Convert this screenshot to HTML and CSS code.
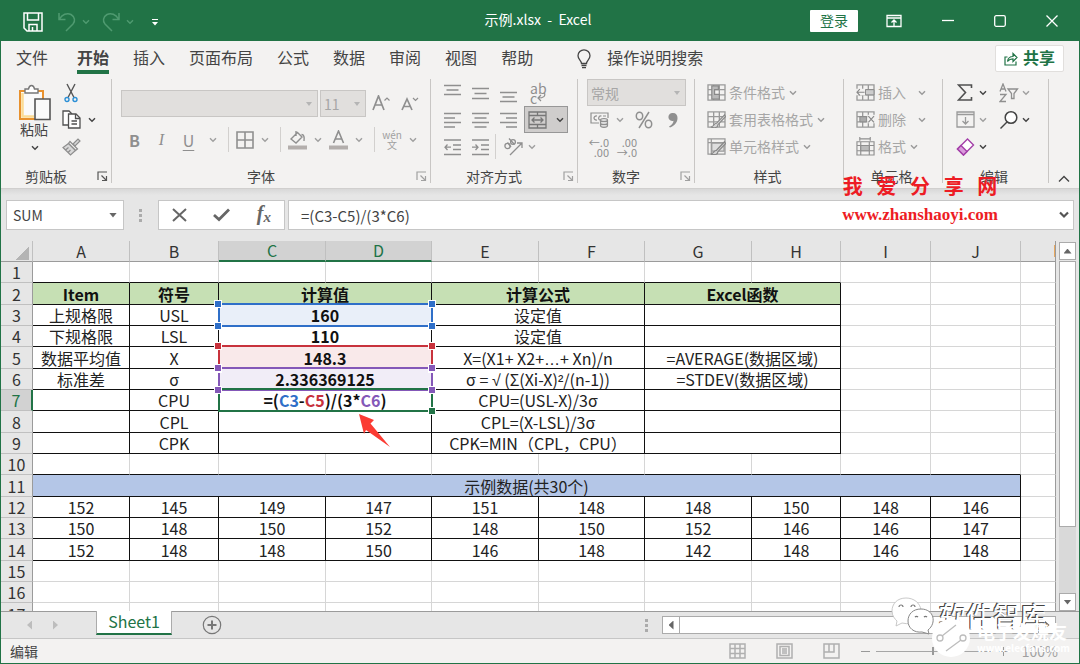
FILE: index.html
```html
<!DOCTYPE html>
<html lang="zh-CN">
<head>
<meta charset="utf-8">
<title>示例.xlsx - Excel</title>
<link rel="stylesheet" href="styles.css">
</head>
<body>
<svg class="defs" aria-hidden="true">
  <symbol id="chev" viewBox="0 0 8 6"><path d="M1 1.2 4 4.3 7 1.2" fill="none" stroke="currentColor" stroke-width="1.4"/></symbol>
  <symbol id="launch" viewBox="0 0 11 11"><path d="M1 9V1H10M4.500 4.500 9 9M9.500 5V9.500H5" fill="none" stroke="currentColor" stroke-width="1.200"/></symbol>
  <symbol id="grid" viewBox="0 0 20 18"><path d="M1 1H19V17H1ZM1 6H19M1 11.500H19M7 1V17M13 1V17" fill="none" stroke="currentColor" stroke-width="1.400"/></symbol>
</svg>
<div class="app">
  <header class="titlebar">
    <div class="quick">
      <button class="ic save" aria-label="保存"><svg width="20" height="20" viewBox="0 0 20 20" fill="none" stroke="#fff" stroke-width="1.500"><path d="M1 1H19V19H4L1 16ZM4.500 1V8H15.500V1M6 19V12.500H14V19M9.500 15V19"/></svg></button>
      <button class="ic undo" aria-label="撤销"><svg width="18" height="20" viewBox="0 0 18 20" fill="none" stroke="#4f9a70" stroke-width="1.500"><path d="M1 1V7.500H7.500M1.500 7C4 2.500 9 .5 13 2.500C17 5 17.500 9 15 12L8 19"/></svg><svg class="chev faint"><use href="#chev"/></svg></button>
      <button class="ic redo" aria-label="恢复"><svg width="18" height="20" viewBox="0 0 18 20" fill="none" stroke="#4f9a70" stroke-width="1.500"><path d="M17 1V7.500H10.500M16.500 7C14 2.500 9 .5 5 2.500C1 5 .5 9 3 12L10 19"/></svg><svg class="chev faint"><use href="#chev"/></svg></button>
      <button class="ic" aria-label="自定义快速访问工具栏"><svg width="6" height="7" viewBox="0 0 6 7" fill="#fff"><path d="M0 0H6V1H0ZM0 3H6L3 6.500Z"/></svg></button>
    </div>
    <h1 class="doc">示例.xlsx&nbsp; - &nbsp;Excel</h1>
    <div class="winctl">
      <button class="login">登录</button>
      <button class="ic" aria-label="功能区显示选项"><svg width="16" height="14" viewBox="0 0 16 14" fill="none" stroke="#fff" stroke-width="1.300"><path d="M1 1.500H15V12.500H1ZM1 4H15M8 12V6M5.500 8.500 8 6 10.500 8.500"/></svg></button>
      <button class="ic" aria-label="最小化"><svg width="12" height="12" viewBox="0 0 12 12" stroke="#fff" stroke-width="1.300"><path d="M0 5.500H12"/></svg></button>
      <button class="ic" aria-label="最大化"><svg width="12" height="12" viewBox="0 0 12 12" fill="none" stroke="#fff" stroke-width="1.300"><rect x=".7" y=".7" width="10.600" height="10.600" rx="1.500"/></svg></button>
      <button class="ic" aria-label="关闭"><svg width="12" height="12" viewBox="0 0 12 12" stroke="#fff" stroke-width="1.300"><path d="M.5 .5 11.500 11.500M11.500 .5 .5 11.500"/></svg></button>
    </div>
  </header>

  <nav class="tabs">
    <a href="#file" class="file">文件</a><a href="#home" class="on">开始</a><a href="#insert">插入</a><a href="#layout">页面布局</a><a href="#formula">公式</a><a href="#data">数据</a><a href="#review">审阅</a><a href="#view">视图</a><a href="#help">帮助</a>
    <button class="tell"><svg width="14" height="20" viewBox="0 0 14 20" fill="none" stroke="#444" stroke-width="1.300"><path d="M4.500 14.500C4.500 11.500 1 10.500 1 6.800A6 6 0 0 1 13 6.800C13 10.500 9.500 11.500 9.500 14.500ZM4.500 16.500H9.500M5 18.700H9"/></svg><span>操作说明搜索</span></button>
    <button class="share"><svg width="14" height="14" viewBox="0 0 14 14" fill="none" stroke="#217346" stroke-width="1.200"><path d="M3.500 5H1V13H12V9.500M3.500 9.500C4 6 6 4.500 9 4.500V1.500L13 5.500 9 9.500V6.800C6.500 6.800 5 7.500 3.500 9.500Z"/></svg><span>共享</span></button>
  </nav>

  <section class="ribbon">
    <div class="group g-clip">
      <div class="body">
        <button class="paste"><svg width="34" height="37" viewBox="0 0 34 37"><path d="M2 7H25V35H2Z" fill="#fafafa" stroke="#e8912d" stroke-width="2"/><path d="M4.500 9V32.500H16" fill="none" stroke="#fbdc95" stroke-width="2.500"/><path d="M7 9V5H10.500C11 2.500 12 1.500 13.500 1.500S16 2.500 16.500 5H20V9Z" fill="#fff" stroke="#777" stroke-width="1.400"/><path d="M17 15H32V35.500H17Z" fill="#fafafa" stroke="#555" stroke-width="1.600"/></svg><span>粘贴</span><svg class="chev dark"><use href="#chev"/></svg></button>
        <div class="rows small">
          <div class="row"><button class="ic i22" aria-label="剪切"><svg width="14" height="20" viewBox="0 0 14 20" fill="none" stroke-width="1.400"><path d="M3 1 10 14.500M11 1 4 14.500" stroke="#555"/><circle cx="3" cy="16.500" r="2" stroke="#2b8fd6"/><circle cx="11" cy="16.500" r="2" stroke="#2b8fd6"/></svg></button></div>
          <div class="row"><button class="ic i22" aria-label="复制"><svg width="19" height="19" viewBox="0 0 19 19" fill="#fff" stroke="#505050" stroke-width="1.300"><path d="M6 15H1V1H7L10 4"/><path d="M6.500 4H14L18 8V18H6.500Z"/><path d="M13.500 4V8.500H18M9.500 11H15M9.500 14H15" fill="none"/></svg></button><svg class="chev dark"><use href="#chev"/></svg></div>
          <div class="row"><button class="ic i22" aria-label="格式刷"><svg width="19" height="18" viewBox="0 0 19 18" fill="#d8d8d8" stroke="#8d8d8d" stroke-width="1.200"><path d="M11 6 16 1 18 3 13 8Z"/><path d="M8 3.500 15.500 11 13.500 12.500 6.500 5.500Z" fill="#f3f2f1"/><path d="M6.500 5.500 1 9.500 8.500 17 13.500 12.500ZM3.500 12 6.500 9.500M6 14.500 8.500 12"/></svg></button></div>
        </div>
      </div>
      <div class="cap"><span>剪贴板</span><svg class="launch dark"><use href="#launch"/></svg></div>
    </div>

    <div class="group g-font">
      <div class="body col">
        <div class="row">
          <span class="drop fname"><select aria-label="字体" disabled><option></option></select></span>
          <span class="drop fsize"><select aria-label="字号" disabled><option>11</option></select></span>
          <button class="ic grow" disabled aria-label="增大字号"><svg width="18" height="18" viewBox="0 0 18 18" fill="none" stroke="#8f8f8f"><path d="M1 15 6.500 1 12 15M3 10H10" stroke-width="1.700"/><path d="M12.500 5.500 15 3 17.500 5.500" stroke-width="1.200"/></svg></button>
          <button class="ic grow" disabled aria-label="减小字号"><svg width="18" height="18" viewBox="0 0 18 18" fill="none" stroke="#8f8f8f"><path d="M1 15 6 4 11 15M3 11.500H9" stroke-width="1.700"/><path d="M12 3 14.500 5.500 17 3" stroke-width="1.200"/></svg></button>
        </div>
        <div class="row fmt">
          <button class="let b" disabled>B</button><button class="let i" disabled>I</button><button class="let u" disabled>U</button><svg class="chev"><use href="#chev"/></svg>
          <i class="sep"></i>
          <button class="ic" disabled aria-label="边框"><svg width="18" height="18" viewBox="0 0 18 18" fill="none" stroke="#8f8f8f" stroke-width="1.600"><path d="M1 1H17V17H1ZM1 9H17M9 1V17"/></svg></button><svg class="chev"><use href="#chev"/></svg>
          <i class="sep"></i>
          <button class="ic" disabled aria-label="填充颜色"><svg width="19" height="20" viewBox="0 0 19 20" fill="none" stroke="#8f8f8f" stroke-width="1.400"><path d="M8 1V6M3 9 9.500 2.500 14 7 8 13ZM13.500 4.500C16 4.500 16.500 7 16 11"/><path d="M0 17.500H19" stroke="#b3aeac" stroke-width="4"/></svg></button><svg class="chev"><use href="#chev"/></svg>
          <button class="ic" disabled aria-label="字体颜色"><svg width="19" height="20" viewBox="0 0 19 20" fill="none" stroke="#8f8f8f" stroke-width="1.600"><path d="M4.500 13 9.500 1 14.500 13M6 9H13"/><path d="M0 17.500H19" stroke="#b3aeac" stroke-width="4"/></svg></button><svg class="chev"><use href="#chev"/></svg>
          <i class="sep"></i>
          <button class="pinyin" disabled><span>wén</span><span>文</span></button><svg class="chev"><use href="#chev"/></svg>
        </div>
      </div>
      <div class="cap"><span>字体</span><svg class="launch"><use href="#launch"/></svg></div>
    </div>

    <div class="group g-align">
      <div class="body col">
        <div class="row">
          <button class="ic i28" disabled aria-label="顶端对齐"><svg width="18" height="20" viewBox="0 0 18 20" stroke="#8f8f8f" stroke-width="1.300"><path d="M0 2.500H17M2.500 7H14.500M0 11.500H17"/></svg></button>
          <button class="ic i28" disabled aria-label="垂直居中"><svg width="18" height="20" viewBox="0 0 18 20" stroke="#8f8f8f" stroke-width="1.300"><path d="M0 5.500H17M2.500 10.500H14.500M0 15.500H17"/></svg></button>
          <button class="ic i28" disabled aria-label="底端对齐"><svg width="18" height="20" viewBox="0 0 18 20" stroke="#8f8f8f" stroke-width="1.300"><path d="M0 9.500H17M2.500 14H14.500M0 18.500H17"/></svg></button>
          <button class="wrap" disabled aria-label="自动换行"><span>ab</span><span>c<svg width="9" height="9" viewBox="0 0 9 9" fill="none" stroke="#8f8f8f" stroke-width="1.200"><path d="M7.500 0C8.500 3 7 5 1 5M4 2 1 5 4 8"/></svg></span></button>
        </div>
        <div class="row">
          <button class="ic i28" disabled aria-label="左对齐"><svg width="18" height="18" viewBox="0 0 18 18" stroke="#8f8f8f" stroke-width="1.300"><path d="M0 2.500H17M0 7H11M0 11.500H17M0 16H11"/></svg></button>
          <button class="ic i28" disabled aria-label="居中"><svg width="18" height="18" viewBox="0 0 18 18" stroke="#8f8f8f" stroke-width="1.300"><path d="M0 2.500H17M2.500 7H14.500M0 11.500H17M2.500 16H14.500"/></svg></button>
          <button class="ic i28" disabled aria-label="右对齐"><svg width="18" height="18" viewBox="0 0 18 18" stroke="#8f8f8f" stroke-width="1.300"><path d="M0 2.500H17M6 7H17M0 11.500H17M6 16H17"/></svg></button>
          <button class="merge" disabled aria-label="合并后居中"><svg width="19" height="18" viewBox="0 0 19 18" fill="none" stroke="#777" stroke-width="1.300"><path d="M1 1H18V17H1ZM1 4.500H18M1 13.500H18M9.500 1V4.500M9.500 13.500V17M4 9H15M6.500 6.500 4 9 6.500 11.500M12.500 6.500 15 9 12.500 11.500"/></svg><svg class="chev dark"><use href="#chev"/></svg></button>
        </div>
        <div class="row">
          <button class="ic i28" disabled aria-label="减少缩进"><svg width="18" height="18" viewBox="0 0 18 18" fill="none" stroke="#8f8f8f" stroke-width="1.300"><path d="M0 2H17M9 7H17M9 11.500H17M0 16.500H17M7 9.200H1M3.500 6.500 1 9.200 3.500 12"/></svg></button>
          <button class="ic i28" disabled aria-label="增加缩进"><svg width="18" height="18" viewBox="0 0 18 18" fill="none" stroke="#8f8f8f" stroke-width="1.300"><path d="M0 2H17M9 7H17M9 11.500H17M0 16.500H17M0 9.200H6M3.500 6.500 6 9.200 3.500 12"/></svg></button>
          <i class="sep"></i>
          <button class="ic orient" disabled aria-label="方向"><svg width="20" height="19" viewBox="0 0 20 19" fill="none" stroke="#8f8f8f" stroke-width="1.300"><path d="M7 18 18.500 6.500M14 6H19V11"/><circle cx="4.500" cy="9" r="2.600"/><path d="M4.500 5.500 8 10M6 1.500 11.500 7.500"/><circle cx="10" cy="5" r="2.400"/></svg></button><svg class="chev"><use href="#chev"/></svg>
        </div>
      </div>
      <div class="cap"><span>对齐方式</span><svg class="launch"><use href="#launch"/></svg></div>
    </div>

    <div class="group g-num">
      <div class="body col">
        <div class="row"><span class="drop numfmt"><select aria-label="数字格式" disabled><option>常规</option></select></span></div>
        <div class="row tools">
          <button class="ic" disabled aria-label="会计数字格式"><svg width="19" height="17" viewBox="0 0 19 17" fill="none" stroke="#8f8f8f" stroke-width="1.200"><path d="M9 12H1V2H18V7M7 5C3 4.500 3 9.500 7 9M11.500 5C8 4.500 8 9 10 9M13 5H16"/><path d="M10.500 9V14.500C10.500 17 17.500 17 17.500 14.500V9C17.500 7 10.500 7 10.500 9C10.500 11 17.500 11 17.500 9M10.500 12C10.500 14 17.500 14 17.500 12" fill="#ddd"/></svg></button><svg class="chev"><use href="#chev"/></svg>
          <button class="pct" disabled aria-label="百分比样式"><svg width="18" height="18" viewBox="0 0 18 18" fill="none" stroke="#8f8f8f" stroke-width="1.500"><ellipse cx="4.500" cy="5" rx="3.200" ry="3.800"/><ellipse cx="13.500" cy="13" rx="3.200" ry="3.800"/><path d="M14 1 4 17"/></svg></button>
          <button class="ic" disabled aria-label="千位分隔样式"><svg width="10" height="16" viewBox="0 0 10 16" fill="#8f8f8f"><path d="M5 1A4 4 0 1 0 5.500 8.800C5.500 11 4 13 1 14.500L2 15.500C7 13.500 9.500 10 9.500 6C9.500 3 8 1 5 1Z"/></svg></button>
        </div>
        <div class="row dec">
          <button class="stack" disabled aria-label="增加小数位数"><span>←.0</span><span>.00</span></button>
          <button class="stack" disabled aria-label="减少小数位数"><span>.00</span><span>→.0</span></button>
        </div>
      </div>
      <div class="cap"><span>数字</span><svg class="launch"><use href="#launch"/></svg></div>
    </div>

    <div class="group g-style">
      <div class="body col">
        <button class="row cmd" disabled><svg width="19" height="17" viewBox="0 0 20 18"><use href="#grid"/><path d="M5 2H12V6H8V11H13V16H5Z" fill="#b9b9b9" stroke="#888" stroke-width="1.200"/></svg><span>条件格式</span><svg class="chev"><use href="#chev"/></svg></button>
        <button class="row cmd" disabled><svg width="19" height="17" viewBox="0 0 20 18"><use href="#grid"/><path d="M18.500 4 10 13C7 13 7.500 16.500 4 17C8 18.500 11.500 17.500 11.500 14.500L19.500 6Z" fill="#d5d5d5" stroke="#888" stroke-width="1.200"/></svg><span>套用表格格式</span><svg class="chev"><use href="#chev"/></svg></button>
        <button class="row cmd" disabled><svg width="19" height="17" viewBox="0 0 20 18" fill="none" stroke="#999" stroke-width="1.300"><path d="M1 1H19V17H1ZM1 5H19M4.500 1V17" /><path d="M5 5.500H18V14H5Z" fill="#dedede"/><path d="M18.500 4 10 13C7 13 7.500 16.500 4 17C8 18.500 11.500 17.500 11.500 14.500L19.500 6Z" fill="#d5d5d5" stroke="#888"/></svg><span>单元格样式</span><svg class="chev"><use href="#chev"/></svg></button>
      </div>
      <div class="cap"><span>样式</span></div>
    </div>

    <div class="group g-cell">
      <div class="body col">
        <button class="row cmd" disabled><svg width="19" height="17" viewBox="0 0 20 18"><use href="#grid"/><path d="M0 5H10V12H0Z" fill="#f3f2f1"/><path d="M10 6H19V11.500H10Z" fill="#ccc" stroke="#888"/><path d="M9 8.700H1M4 5.500 1 8.700 4 12" fill="none" stroke="#888" stroke-width="1.200"/></svg><span>插入</span><svg class="chev far"><use href="#chev"/></svg></button>
        <button class="row cmd" disabled><svg width="19" height="17" viewBox="0 0 20 18"><use href="#grid"/><path d="M12 4H20V13H12Z" fill="#f3f2f1"/><path d="M4 6H11V11.500H4Z" fill="#aaa" stroke="#888"/><path d="M13 5.500 19 12M19 5.500 13 12" fill="none" stroke="#888" stroke-width="1.200"/></svg><span>删除</span><svg class="chev far"><use href="#chev"/></svg></button>
        <button class="row cmd" disabled><svg width="19" height="19" viewBox="0 0 20 20" fill="none" stroke="#8f8f8f" stroke-width="1.200"><path d="M1 5H19V19H1ZM1 9H19M1 14.500H19M5 5V19M14 5V19M4 0V4M15 0V4M4 2H15"/><path d="M5 9H14V14.500H5Z" fill="#bbb"/></svg><span>格式</span><svg class="chev"><use href="#chev"/></svg></button>
      </div>
      <div class="cap"><span>单元格</span></div>
    </div>

    <div class="group g-edit">
      <div class="body col">
        <div class="row"><button class="ic e1" aria-label="自动求和"><svg width="16" height="17" viewBox="0 0 16 17" fill="none" stroke="#505050" stroke-width="1.600"><path d="M14.500 4V1H1.500L8.500 8.500 1.500 16H14.500V13"/></svg></button><svg class="chev dark"><use href="#chev"/></svg>
          <button class="ic e2" disabled aria-label="排序和筛选"><svg width="20" height="20" viewBox="0 0 20 20" fill="none" stroke="#8f8f8f" stroke-width="1.300"><path d="M1 8.500 4 1 7 8.500M2 6H6M1 11.500H7L1 18.500H7M9 6H18.500L15 10.500V15.500H12.500V10.500Z"/></svg></button><svg class="chev"><use href="#chev"/></svg></div>
        <div class="row"><button class="ic e1" disabled aria-label="填充"><svg width="19" height="17" viewBox="0 0 19 17" fill="none" stroke="#9a9a9a" stroke-width="1.300"><path d="M1 1H18V16H1ZM1 3.500H18M9.500 6V13M6.500 10 9.500 13 12.500 10"/></svg></button><svg class="chev"><use href="#chev"/></svg>
          <button class="ic e2" aria-label="查找和选择"><svg width="20" height="20" viewBox="0 0 20 20" fill="none" stroke="#444" stroke-width="1.500"><circle cx="12" cy="7.500" r="5.800" fill="#fff"/><path d="M8 12 1.500 18.500"/></svg></button><svg class="chev dark"><use href="#chev"/></svg></div>
        <div class="row"><button class="ic e1" aria-label="清除"><svg width="19" height="18" viewBox="0 0 19 18" stroke="#a33ea8" stroke-width="1.400"><path d="M1.500 11 11.500 1 17.500 7 7.500 17Z" fill="#fff"/><path d="M1.500 11 5 7.500 11 13.500 7.500 17Z" fill="#d99bdc"/></svg></button><svg class="chev dark"><use href="#chev"/></svg></div>
      </div>
      <div class="cap"><span>编辑</span></div>
    </div>
    <button class="collapse" aria-label="折叠功能区"><svg width="12" height="8" viewBox="0 0 12 8" fill="none" stroke="#444" stroke-width="1.400"><path d="M1 6.500 6 1.500 11 6.500"/></svg></button>
  </section>

  <section class="fbar">
    <div class="namebox"><input aria-label="名称框" value="SUM"><i class="tri"></i></div>
    <i class="dots"></i>
    <div class="fbtns">
      <button class="ic" aria-label="取消"><svg width="15" height="14" viewBox="0 0 15 14" stroke="#666" stroke-width="2"><path d="M1 1 14 13M14 1 1 13"/></svg></button>
      <button class="ic" aria-label="输入"><svg width="17" height="14" viewBox="0 0 17 14" fill="none" stroke="#666" stroke-width="2.800"><path d="M1 7 6 11.500 16 1.500"/></svg></button>
      <button class="fx" aria-label="插入函数"><i>f</i><sub>x</sub></button>
    </div>
    <div class="formula"><input aria-label="编辑栏" value="=(C3-C5)/(3*C6)"><svg width="10" height="8" viewBox="0 0 10 8" fill="none" stroke="#555" stroke-width="2.200"><path d="M1 1.500 5 5.500 9 1.500"/></svg></div>
  </section>

  <main class="work">
    <div class="sheet">
      <table>
        <colgroup><col class="c0"><col class="cA"><col class="cS"><col class="cL"><col class="cM"><col class="cL"><col class="cM"><col class="cL"><col class="cS"><col class="cR"><col class="cR"><col></colgroup>
        <thead><tr><th class="corner"></th><th>A</th><th>B</th><th class="sel">C</th><th class="sel">D</th><th>E</th><th>F</th><th>G</th><th>H</th><th>I</th><th>J</th><th class="edge"></th></tr></thead>
        <tbody>
        <tr class="pre8"><th>1</th><td></td><td></td><td></td><td></td><td></td><td></td><td></td><td></td><td></td><td></td><td></td></tr>
        <tr class="calc head"><th>2</th><td>Item</td><td>符号</td><td colspan="2">计算值</td><td colspan="2">计算公式</td><td colspan="2">Excel函数</td><td></td><td></td><td></td></tr>
        <tr class="calc"><th>3</th><td>上规格限</td><td>USL</td><td colspan="2" class="ref blue">160<i></i><b></b><b></b><b></b><b></b></td><td colspan="2">设定值</td><td colspan="2"></td><td></td><td></td><td></td></tr>
        <tr class="calc"><th>4</th><td>下规格限</td><td>LSL</td><td colspan="2" class="val">110</td><td colspan="2">设定值</td><td colspan="2"></td><td></td><td></td><td></td></tr>
        <tr class="calc"><th>5</th><td>数据平均值</td><td>X</td><td colspan="2" class="ref red">148.3<i></i><b></b><b></b><b></b><b></b></td><td colspan="2">X=(X1+ X2+<span class="lat">…</span>+ Xn)/n</td><td colspan="2">=AVERAGE(数据区域)</td><td></td><td></td><td></td></tr>
        <tr class="calc"><th>6</th><td>标准差</td><td>σ</td><td colspan="2" class="ref purple">2.336369125<i></i><b></b><b></b><b></b><b></b></td><td colspan="2">σ = <span class="lat">√</span> (Σ(Xi-X)<span class="lat">²</span>/(n-1))</td><td colspan="2">=STDEV(数据区域)</td><td></td><td></td><td></td></tr>
        <tr class="calc"><th class="sel">7</th><td></td><td>CPU</td><td colspan="2" class="ref green">=(<span class="tb">C3</span>-<span class="tr">C5</span>)/(3*<span class="tp">C6</span>)<i></i><b></b><svg class="arrow" width="34" height="36" viewBox="0 0 34 36"><path d="M1 1 16 7 12.500 10.500 32 34 8 17 6 21Z" fill="#fb3b33"/></svg></td><td colspan="2">CPU=(USL-X)/3σ</td><td colspan="2"></td><td></td><td></td><td></td></tr>
        <tr class="calc"><th>8</th><td></td><td>CPL</td><td colspan="2"></td><td colspan="2">CPL=(X-LSL)/3σ</td><td colspan="2"></td><td></td><td></td><td></td></tr>
        <tr class="calc"><th>9</th><td></td><td>CPK</td><td colspan="2"></td><td colspan="2">CPK=MIN（CPL，CPU）</td><td colspan="2"></td><td></td><td></td><td></td></tr>
        <tr class="pre10"><th>10</th><td></td><td></td><td></td><td></td><td></td><td></td><td></td><td></td><td></td><td></td><td></td></tr>
        <tr class="band"><th>11</th><td colspan="10">示例数据(共30个)</td><td></td></tr>
        <tr class="data"><th>12</th><td>152</td><td>145</td><td>149</td><td>147</td><td>151</td><td>148</td><td>148</td><td>150</td><td>148</td><td>146</td><td></td></tr>
        <tr class="data"><th>13</th><td>150</td><td>148</td><td>150</td><td>152</td><td>148</td><td>150</td><td>152</td><td>146</td><td>146</td><td>147</td><td></td></tr>
        <tr class="data"><th>14</th><td>152</td><td>148</td><td>148</td><td>150</td><td>146</td><td>148</td><td>142</td><td>148</td><td>146</td><td>148</td><td></td></tr>
        <tr><th>15</th><td></td><td></td><td></td><td></td><td></td><td></td><td></td><td></td><td></td><td></td><td></td></tr>
        <tr><th>16</th><td></td><td></td><td></td><td></td><td></td><td></td><td></td><td></td><td></td><td></td><td></td></tr>
        <tr><th>17</th><td></td><td></td><td></td><td></td><td></td><td></td><td></td><td></td><td></td><td></td><td></td></tr>
        </tbody>
      </table>
    </div>
    <div class="vscroll"><button aria-label="向上滚动"><i class="tri up"></i></button><div class="thumb"></div><div class="rest"></div><button aria-label="向下滚动"><i class="tri"></i></button></div>
  </main>

  <div class="sheetbar">
    <div class="navs"><i class="tri lt pale"></i><i class="tri rt pale"></i></div>
    <a href="#sheet1" class="stab">Sheet1</a>
    <button class="ic plus" aria-label="新工作表"><svg width="20" height="20" viewBox="0 0 20 20" fill="none" stroke="#777"><circle cx="10" cy="10" r="8.700" stroke-width="1.200"/><path d="M5.500 10H14.500M10 5.500V14.500" stroke-width="2"/></svg></button>
    <i class="dots"></i>
    <div class="hscroll"><button aria-label="向左滚动"><i class="tri lt"></i></button><div class="bar"></div><button aria-label="向右滚动"><i class="tri rt"></i></button></div>
  </div>

  <footer class="status">
    <span class="mode">编辑</span>
    <button class="ic" aria-label="普通"><svg width="17" height="16" viewBox="0 0 17 16" fill="none" stroke="#b0b0b0" stroke-width="1.500"><path d="M1 1H16V15H1ZM1 5.500H16M1 10.500H16M6 1V15M11 1V15"/></svg></button>
    <button class="ic" aria-label="页面布局"><svg width="17" height="16" viewBox="0 0 17 16" fill="none" stroke="#b0b0b0" stroke-width="1.500"><path d="M1 1H16V15H1ZM4 3.500H13V12.500H4ZM6 6H11M6 8H11M6 10H11"/></svg></button>
    <button class="ic" aria-label="分页预览"><svg width="17" height="16" viewBox="0 0 17 16" fill="none" stroke="#b0b0b0" stroke-width="1.500"><path d="M1 1H16V15H1ZM6 1V9H1M6 9H11V1"/></svg></button>
    <div class="zoom"><i class="minus"></i><input type="range" min="0" max="100" value="49" aria-label="显示比例"><i class="minus more"></i></div>
    <span class="pctv">100%</span>
  </footer>

  <div class="mark site"><strong>我   爱   分   享   网</strong><span>www.zhanshaoyi.com</span></div>
  <div class="mark wechat"><svg width="44" height="38" viewBox="0 0 44 38"><path d="M15 1C6 1 1 7 1 14C1 19 4 22 6 24L5 29 11 26C24 29 31 22 30 13C29 6 23 1 15 1Z" fill="#fff" stroke="#bbb" stroke-width=".8"/><path d="M30 12C22 12 17 17 17 24C17 31 23 36 31 35L38 37 37 33C46 26 43 12 30 12Z" fill="#fff" stroke="#888" stroke-width="1"/><g fill="none" stroke="#777" stroke-width="1.200"><path d="M8 10A2 2 0 0 1 12 10M20 10A2 2 0 0 1 24 10M24 20A2 2 0 0 1 27 20M33 20A2 2 0 0 1 36 20"/></g></svg><span>软件智库</span></div>
  <div class="mark fans"><svg width="40" height="40" viewBox="0 0 40 40" fill="none" stroke="#bdbdbd" stroke-width="1.300"><circle cx="20" cy="20" r="19" fill="#fff" stroke="none"/><circle cx="9" cy="20" r="3"/><circle cx="32" cy="20" r="3"/><path d="M11 18 25 7M15 33 30 22"/></svg><div><strong>电子发烧友</strong><span>www.elecfans.com</span></div></div>
</div>
</body>
</html>
```
FILE: styles.css
```css
* { box-sizing: border-box; }
body { margin: 0; font-family: "Noto Sans CJK SC", "Noto Sans", sans-serif; color: #444; }
button, input, select { font: inherit; color: inherit; margin: 0; padding: 0; border: 0; background: none; }
svg { display: block; flex: none; }
a { color: inherit; text-decoration: none; }
.defs { position: absolute; width: 0; height: 0; }
.app { position: relative; display: flex; flex-direction: column; height: 100vh; min-height: 480px; overflow: hidden; background: #e6e6e6; border: 1px solid #217346; border-top: 0; }
.ic { display: flex; align-items: center; justify-content: center; flex: none; }
.chev { width: 8px; height: 6px; color: #a0a0a0; }
.dark { color: #444; }
.faint { color: #4f9a70; }
.tri { width: 8px; height: 5px; background: #666; clip-path: polygon(0 0, 100% 0, 50% 100%); flex: none; }
.tri.up { clip-path: polygon(0 100%, 100% 100%, 50% 0); }
.tri.lt { width: 5px; height: 9px; clip-path: polygon(100% 0, 100% 100%, 0 50%); }
.tri.rt { width: 5px; height: 9px; clip-path: polygon(0 0, 0 100%, 100% 50%); }
.tri.pale { background: #bdbdbd; }
.dots { width: 3px; height: 13px; background: repeating-linear-gradient(#ababab 0 3px, transparent 3px 5px); flex: none; }

.titlebar { display: grid; grid-template-columns: 1fr auto 1fr; align-items: center; height: 41px; flex: none; background: #217346; color: #fff; }
.quick { display: flex; align-items: center; padding-left: 22px; padding-top: 3px; }
.undo { margin-left: 15px; gap: 6px; }
.redo { margin-left: 12px; gap: 6px; }
.redo + .ic { margin-left: 18px; }
.doc { margin: 0; font-size: 14px; font-weight: 400; line-height: 20px; padding: 0 4px 3px 0; }
.winctl { display: flex; align-items: center; justify-content: flex-end; gap: 40px; padding-right: 21px; }
.login { width: 48px; height: 22px; padding-bottom: 2px; background: #fff; color: #217346; font-size: 14px; line-height: 18px; border-radius: 1px; margin-right: -12px; }

.tabs { display: flex; height: 36px; flex: none; background: #f3f2f1; padding: 0 15px 0 3px; font-size: 16px; line-height: 32px; }
.tabs a { margin: 0 12px; height: 33px; }
.tabs .file { margin-right: 17px; }
.tabs .on { font-weight: 700; border-bottom: 4px solid #217346; }
.tell { display: flex; align-items: center; gap: 16px; height: 36px; margin-left: 32px; }
.tell span { height: 36px; }
.share { display: flex; align-items: center; gap: 5px; height: 27px; width: 69px; justify-content: center; margin: 4px 0 0 auto; background: #fff; border: 1px solid #e1dfdd; border-radius: 2px; color: #217346; font-weight: 700; line-height: 22px; }
.share span { height: 26px; }

.ribbon { display: flex; height: 112px; flex: none; padding: 2px 0 5px; background: #f3f2f1; border-bottom: 1px solid #d0cfce; font-size: 14px; }
.group { display: flex; flex-direction: column; flex: none; border-right: 1px solid #c8c6c4; }
.body { display: flex; flex: 1; min-height: 0; }
.body.col, .rows { display: flex; flex-direction: column; }
.row { display: flex; align-items: center; height: 27px; flex: none; }
.cap { display: flex; align-items: center; height: 14px; line-height: 14px; padding-right: 3px; }
.cap span { flex: 1; text-align: center; }
.launch { width: 11px; height: 11px; color: #a0a0a0; margin-left: 6px; }
.launch.dark { color: #555; }
.g-clip { width: 111px; }
.paste { display: flex; flex-direction: column; align-items: center; width: 38px; margin: 5px 6px 0 15px; line-height: 16px; }
.paste span { margin-right: 2px; }
.paste .chev { margin-top: 8px; }
.small .chev { margin-left: 6px; }
.i22 { width: 22px; }
.g-font { width: 319px; }
.g-font .body { padding: 11px 0 0 9px; }
.drop { position: relative; display: block; height: 27px; }
.drop select { appearance: none; display: block; width: 100%; height: 100%; padding: 0 3px; background: #e1dfdd; border: 1px solid #c8c6c4; color: #a6a6a6; opacity: 1; line-height: 22px; }
.drop::after { content: ""; position: absolute; right: 6px; top: 12px; width: 6px; height: 4px; background: #b5b5b5; clip-path: polygon(0 0, 100% 0, 50% 100%); }
.fname { width: 197px; margin-right: 2px; }
.fsize { width: 46px; margin-right: 6px; }
.grow { margin-right: 11px; }
.fmt { margin-top: 9px; }
.let { width: 27px; color: #8f8f8f; font-size: 16px; line-height: 24px; }
.let.b { font-weight: 700; }
.let.i { font-style: italic; font-family: "Liberation Serif", serif; }
.let.u { text-decoration: underline; text-underline-offset: 3px; }
.fmt .chev { margin: 0 7px; }
.sep { width: 1px; height: 25px; background: #d2d0ce; flex: none; }
.fmt .sep { margin: 0 7px 0 4px; }
.pinyin { display: flex; flex-direction: column; width: 20px; color: #a0a0a0; font-size: 10px; line-height: 10px; align-items: center; }
.g-align { width: 147px; }
.g-align .body { padding-left: 8px; }
.i28 { width: 28px; }
.wrap { display: flex; flex-direction: column; margin-left: 7px; color: #8f8f8f; font-size: 14px; line-height: 10px; }
.wrap span { display: flex; }
.merge { display: flex; align-items: center; gap: 9px; width: 44px; height: 27px; margin-left: 1px; padding-left: 3px; background: #cfcdcc; border: 1px solid #979797; }
.orient { margin: 0 5px 0 7px; }
.g-num { width: 117px; }
.g-num .body { padding-left: 9px; }
.numfmt { width: 99px; }
.tools { padding-left: 3px; }
.tools .chev { margin: 0 11px 0 7px; }
.pct { margin-right: 15px; }
.dec { gap: 8px; padding-left: 2px; }
.stack { display: flex; flex-direction: column; align-items: flex-end; width: 20px; font-size: 11px; line-height: 10px; color: #8f8f8f; white-space: nowrap; }
.g-style { width: 149px; }
.g-style .body { padding-left: 12px; }
.g-cell { width: 99px; }
.g-cell .body { padding-left: 12px; }
.cmd { gap: 3px; color: #a6a6a6; }
.cmd svg { color: #9a9a9a; }
.cmd span { line-height: 20px; height: 22px; }
.cmd .chev { margin-left: 1px; }
.cmd .far { margin-left: 9px; }
.g-edit { width: 106px; }
.g-edit .body { padding-left: 12px; }
.e1 { width: 20px; margin-right: 4px; }
.e2 { margin: 0 3px 0 12px; }
.collapse { margin: auto auto 0; }

.fbar { display: flex; align-items: center; flex: none; height: 52px; padding: 0 5px; background: linear-gradient(#d8d8d8, #e6e6e6 6px); font-size: 14px; }
.namebox, .fbtns, .formula { display: flex; align-items: center; height: 30px; background: #fff; border: 1px solid #c6c6c6; }
.namebox { width: 118px; padding: 0 6px; }
.namebox input { flex: 1; min-width: 0; }
.fbar .dots { margin: 0 16px 0 15px; }
.fbtns { width: 127px; justify-content: space-between; padding: 0 13px; margin-right: 3px; }
.fx { font: italic 700 20px/24px "Liberation Serif", serif; color: #666; }
.fx sub { font-size: 15px; vertical-align: -2px; }
.formula { flex: 1; padding: 0 4px 0 12px; }
.formula input { flex: 1; min-width: 0; font-size: 15px; }

.work { display: flex; flex: 1; min-height: 0; }
.sheet { flex: 1; min-width: 0; margin-top: -3px; padding-top: 3px; overflow: hidden; background: #fff content-box; }
.sheet table { width: 100%; table-layout: fixed; border-collapse: separate; border-spacing: 0; font-size: 16px; color: #222; }
.c0 { width: 32px; } .cA { width: 97px; } .cS { width: 89px; } .cL { width: 107px; } .cM { width: 106px; } .cR { width: 90px; }
.sheet th, .sheet td { height: 21px; padding: 0; line-height: 20px; text-align: center; border-right: 1px solid #d6d6d6; border-bottom: 1px solid #d6d6d6; white-space: nowrap; }
.sheet tbody tr:nth-child(3n+2) > * { height: 22px; }
.sheet th { font-weight: 400; background: #e6e6e6; color: #333; border-color: #c0c0c0; }
.sheet thead th { border-bottom-color: #9b9b9b; }
.sheet tbody th { border-right-color: #9b9b9b; }
.sheet tr > :last-child { border-right-color: #9b9b9b; }
.sheet thead .sel { background: #d2d2d2; color: #217346; border-bottom: 2px solid #217346; line-height: 19px; }
.sheet tbody .sel { background: #d2d2d2; color: #217346; border-right: 2px solid #217346; }
.sheet .corner { background: linear-gradient(135deg, transparent 50%, #b4b4b4 50%) 14px 5px / 14px 14px no-repeat #e6e6e6; }
.sheet .edge { background: linear-gradient(#e8a860, #e8a860) right 4px / 1px 12px no-repeat #e6e6e6; border-right-color: #e6e6e6; }
.sheet .pre8 td:nth-of-type(-n+8), .sheet .pre10 td:nth-of-type(-n+10) { border-bottom-color: #111; }
.sheet .calc td:nth-of-type(-n+5), .sheet .data td:nth-of-type(-n+10), .sheet .band td:first-of-type { border-color: #111; }
.head td:nth-of-type(-n+5) { background: #c6e0b4; font-weight: 700; color: #111; }
.band td:first-of-type { background: #b4c6e7; }
.lat { font-family: "Liberation Sans", sans-serif; line-height: 10px; }
.val, .ref { font-weight: 700; color: #111; }
.ref { position: relative; }
.ref i { position: absolute; inset: -2px -2px -2px -1px; border: 2px solid var(--c); }
.ref b { position: absolute; width: 6px; height: 6px; background: var(--c); outline: 1px solid #fff; z-index: 1; }
.ref b:nth-of-type(1) { right: -4px; bottom: -4px; }
.ref b:nth-of-type(2) { left: -4px; bottom: -4px; }
.ref b:nth-of-type(3) { left: -4px; top: -4px; }
.ref b:nth-of-type(4) { right: -4px; top: -4px; }
.blue { --c: #2f6fc8; background: #e9eff9; }
.red { --c: #c8323c; background: #f9e9ea; }
.purple { --c: #8458b8; background: #f1edf7; }
.green { --c: #217346; }
.tb { color: #2f6fc8; } .tr { color: #c8323c; } .tp { color: #8458b8; }
.arrow { position: absolute; left: 139px; top: 23px; z-index: 2; }

.vscroll { display: flex; flex-direction: column; width: 17px; margin: 1px 3px 0 3px; flex: none; }
.vscroll button { display: flex; align-items: center; justify-content: center; height: 18px; background: #fff; border: 1px solid #ababab; flex: none; }
.vscroll .thumb { flex: 266; background: #fff; border: 1px solid #ababab; margin-top: 1px; }
.vscroll .rest { flex: 67; background: #d9d9d9; }

.sheetbar { display: flex; align-items: center; height: 28px; flex: none; background: #e6e6e6; border-top: 1px solid #9b9b9b; border-bottom: 1px solid #c6c6c6; padding-right: 23px; }
.navs { display: flex; gap: 21px; width: 95px; padding-left: 26px; }
.stab { align-self: flex-start; width: 76px; height: 24px; margin-top: -1px; background: #fff; border: 1px solid #ababab; border-top: 0; border-bottom: 2px solid #217346; color: #217346; text-align: center; font-size: 16px; line-height: 20px; }
.plus { margin-left: 30px; }
.sheetbar .dots { margin-left: auto; }
.hscroll { display: flex; flex: 0 1 394px; height: 18px; margin-left: 14px; }
.hscroll button { display: flex; align-items: center; justify-content: center; width: 18px; background: #fff; border: 1px solid #ababab; flex: none; }
.hscroll .bar { flex: 1; background: #fff; border: solid #ababab; border-width: 1px 0; }

.status { display: flex; align-items: center; height: 24px; flex: none; background: #f3f2f1; padding: 0 21px 0 9px; font-size: 14px; line-height: 20px; }
.mode { margin-right: auto; }
.status .ic { margin-right: 30px; }
.zoom { display: flex; align-items: center; gap: 6px; margin: 0 14px 0 -9px; }
.minus { width: 9px; height: 1px; background: #999; }
.more { position: relative; }
.more::after { content: ""; position: absolute; left: 4px; top: -4px; width: 1px; height: 9px; background: #999; }
.zoom input { appearance: none; width: 117px; height: 12px; background: linear-gradient(#a6a6a6, #a6a6a6) center / 100% 1px no-repeat; }
.zoom input::-webkit-slider-thumb { appearance: none; width: 2px; height: 8px; background: #999; }
.pctv { color: #a0a0a0; }

.mark { position: absolute; z-index: 5; white-space: pre; pointer-events: none; }
.site { right: 81px; top: 174px; color: #ed1c24; display: flex; flex-direction: column; align-items: center; }
.site strong { font-size: 20px; line-height: 24px; }
.site span { font: 700 17px/20px "Liberation Serif", serif; margin-top: 7px; }
.wechat { right: 32px; bottom: 28px; display: flex; align-items: center; gap: 4px; color: #fff; font-size: 27px; line-height: 34px; text-shadow: -1px -1px 0 #444, -1px 0 0 #777; }
.fans { right: 9px; bottom: 5px; display: flex; align-items: center; gap: 6px; color: #fff; }
.fans div { display: flex; flex-direction: column; }
.fans strong { font-size: 18px; line-height: 20px; }
.fans span { font-size: 10px; font-weight: 700; line-height: 14px; }
```
